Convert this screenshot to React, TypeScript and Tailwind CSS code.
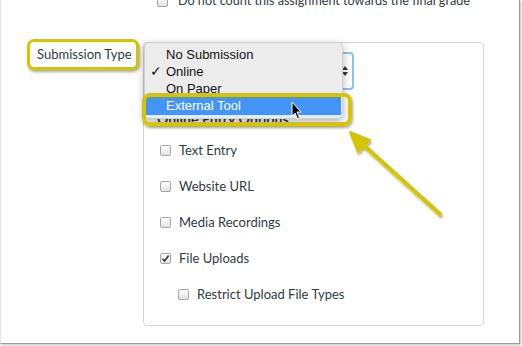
import React from "react";

type BoxProps = { checked?: boolean };

function Checkbox({ checked }: BoxProps) {
  return (
    <div className="w-[11px] h-[11px] shrink-0 rounded-[2px] border border-[#a6a6a6] bg-gradient-to-b from-white to-[#e4e4e4] flex items-center justify-center">
      {checked && (
        <svg width="9" height="9" viewBox="0 0 9 9">
          <path d="M1.5 4.8 L3.6 7 L7.6 1.6" fill="none" stroke="#333" strokeWidth="1.6" />
        </svg>
      )}
    </div>
  );
}

const options = [
  { label: "Text Entry", checked: false, indent: false },
  { label: "Website URL", checked: false, indent: false },
  { label: "Media Recordings", checked: false, indent: false },
  { label: "File Uploads", checked: true, indent: false },
  { label: "Restrict Upload File Types", checked: false, indent: true },
];

export default function App() {
  return (
    <div className="w-[522px] h-[346px] bg-white relative overflow-hidden font-['Lato',sans-serif] text-[13px] text-[#2d3b45]">
      <div className="w-[520px] h-[344px] bg-white border-r border-b border-l border-r-[#9a9a9a] border-b-[#9a9a9a] border-l-[#e4e4e4] shadow-[1px_1px_2px_rgba(0,0,0,0.25)] flex flex-col">

        {/* Top checkbox line (cut off) */}
        <div className="flex items-center gap-[10px] pl-[156px] h-[20px] mt-[-9px] leading-[20px] text-[12.6px]">
          <Checkbox />
          <span className="whitespace-nowrap">Do not count this assignment towards the final grade</span>
        </div>

        {/* Submission type row */}
        <div className="flex mt-[31px]">
          <div className="w-[142px] shrink-0 pl-[26px] mt-[-3px]">
            <div className="w-[112px] h-[31px] border-[3px] border-[#d5c500] rounded-[7px] shadow-[1px_2px_3px_rgba(0,0,0,0.35)] flex items-center pl-[7px] bg-white whitespace-nowrap">
              Submission Type
            </div>
          </div>

          <div className="w-[341px] h-[284px] border border-[#d4d4d4] rounded-[4px] flex flex-col pl-[13px] pt-[9px]">
            <div className="ml-[-2px] w-[199px] h-[38px] rounded-[4px] border-2 border-[#8cc0f7] bg-white flex items-center justify-end pr-[3px]">
              <svg width="8" height="12" viewBox="0 0 8 12">
                <path d="M4 1 L7 5 L1 5 Z M4 11 L7 7 L1 7 Z" fill="#333" />
              </svg>
            </div>
            <div className="mt-[19px] font-bold leading-[20px] text-[14px]">Online Entry Options</div>
            <div className="flex flex-col gap-[16px] mt-[11px] pl-[3px]">
              {options.map((o) => (
                <div
                  key={o.label}
                  className={`flex items-center gap-[8px] h-[20px] leading-[20px] whitespace-nowrap ${o.indent ? "pl-[18px] gap-[7px]" : ""}`}
                >
                  <Checkbox checked={o.checked} />
                  <span>{o.label}</span>
                </div>
              ))}
            </div>
          </div>
        </div>
      </div>

      {/* Native dropdown menu */}
      <div className="absolute left-[144px] top-[42px] w-[199px] h-[77px] bg-[#ececec] rounded-[5px] border border-[#cfcfcf] shadow-[0_3px_8px_rgba(0,0,0,0.3)] pt-[3px] font-['Liberation_Sans',sans-serif] text-[13px] text-[#111]">
        <div className="h-[17px] flex items-center pl-[21px]">No Submission</div>
        <div className="h-[17px] flex items-center pl-[5px]">
          <span className="w-[16px] text-[14px]">✓</span>Online
        </div>
        <div className="h-[17px] flex items-center pl-[21px]">On Paper</div>
        <div className="h-[18px] mx-[1px] flex items-center pl-[20px] bg-[#4295f7] text-white">External Tool</div>
      </div>

      {/* Highlight box around External Tool */}
      <div className="absolute left-[142px] top-[93px] w-[210px] h-[33px] border-[4px] border-[#d5c500] rounded-[8px] shadow-[1px_2px_3px_rgba(0,0,0,0.35)]" />

      {/* Arrow + cursor annotations */}
      <svg className="absolute left-0 top-0" width="522" height="346" viewBox="0 0 522 346">
        <defs>
          <filter id="sh" x="-20%" y="-20%" width="140%" height="140%">
            <feDropShadow dx="1" dy="2" stdDeviation="1.2" floodColor="#000" floodOpacity="0.35" />
          </filter>
        </defs>
        <g filter="url(#sh)">
          <line x1="440" y1="214" x2="358" y2="140" stroke="#d5c500" strokeWidth="4" strokeLinecap="round" />
          <path d="M350 132 L370 140 L358 152 Z" fill="#d5c500" stroke="#d5c500" strokeWidth="2" strokeLinejoin="round" />
        </g>
        <path
          d="M292 102 L292 116 L295 113 L297.5 119 L299.5 118 L297 112 L301 112 Z"
          fill="#000"
          stroke="#fff"
          strokeWidth="1"
          strokeLinejoin="round"
        />
      </svg>
    </div>
  );
}
